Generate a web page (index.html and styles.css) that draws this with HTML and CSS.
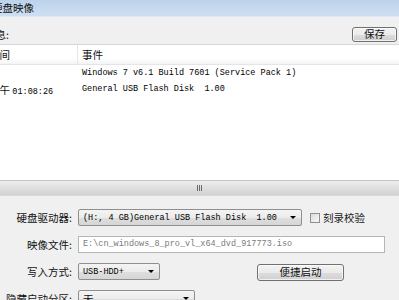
FILE: index.html
```html
<!DOCTYPE html>
<html lang="zh-CN">
<head>
    <meta charset="UTF-8">
    <meta name="viewport" content="width=device-width, initial-scale=1.0">
    <title>硬盘映像</title>
    <link rel="stylesheet" href="styles.css">
</head>
<body>
    <div class="window">
        <div class="titlebar"><span class="title">硬盘映像</span></div>
        <div class="toolbar">
            <span class="msg-label">消息:</span>
            <button class="btn save-btn">保存</button>
        </div>
        <div class="log">
            <div class="log-head">
                <div class="col-time">时间</div>
                <div class="col-event">事件</div>
            </div>
            <div class="log-row">
                <div class="col-time"></div>
                <div class="col-event mono">Windows 7 v6.1 Build 7601 (Service Pack 1)</div>
            </div>
            <div class="log-row">
                <div class="col-time">下午 <span class="mono">01:08:26</span></div>
                <div class="col-event mono">General USB Flash Disk&nbsp; 1.00</div>
            </div>
        </div>
        <div class="splitter"><span class="grip"></span></div>
        <div class="form">
            <label class="form-label">硬盘驱动器:</label>
            <div class="form-field">
                <div class="combo combo-drive"><span class="mono">(H:, 4 GB)General USB Flash Disk&nbsp; 1.00</span><span class="arrow"></span></div>
                <span class="check"></span>
                <span class="check-label">刻录校验</span>
            </div>

            <label class="form-label">映像文件:</label>
            <div class="form-field">
                <div class="textbox mono">E:\cn_windows_8_pro_vl_x64_dvd_917773.iso</div>
            </div>

            <label class="form-label">写入方式:</label>
            <div class="form-field">
                <div class="combo combo-mode"><span class="mono">USB-HDD+</span><span class="arrow"></span></div>
                <button class="btn boot-btn">便捷启动</button>
            </div>

            <label class="form-label">隐藏启动分区:</label>
            <div class="form-field">
                <div class="combo combo-hide"><span>无</span><span class="arrow"></span></div>
            </div>
        </div>
    </div>
</body>
</html>
```

FILE: styles.css
```css
body {
    margin: 0;
    height: 300px;
    overflow: hidden;
    background: #f0f0f0;
    font-family: "Noto Sans CJK SC", "DejaVu Sans", sans-serif;
    font-size: 10.5px;
    color: #111;
}
.mono {
    font-family: "Liberation Mono", "DejaVu Sans Mono", monospace;
    font-size: 8.5px;
    color: #000;
}
.window {
    margin-left: -20px;
    width: 419px;
    display: flex;
    flex-direction: column;
}
.window > div {
    flex-shrink: 0;
}
.titlebar {
    height: 17px;
    background: linear-gradient(#bcd2ec, #cfdff2);
    border-bottom: 1px solid #dfe9f5;
    box-sizing: border-box;
    display: flex;
    align-items: center;
}
.title {
    padding-left: 12px;
    line-height: 1;
}
.toolbar {
    height: 27px;
    display: flex;
    justify-content: space-between;
    align-items: flex-start;
    padding-right: 2px;
    box-sizing: border-box;
}
.msg-label {
    padding-left: 5px;
    margin-top: 10px;
    line-height: 15px;
}
.btn {
    font-family: "Noto Sans CJK SC", sans-serif;
    font-size: 10.5px;
    line-height: 1;
    padding: 0;
    color: #111;
    border: 1px solid #707070;
    border-radius: 3px;
    background: linear-gradient(#f2f2f2 0%, #ebebeb 50%, #dddddd 51%, #cfcfcf 100%);
    box-shadow: inset 0 0 0 1px rgba(255, 255, 255, 0.7);
}
.save-btn {
    margin-top: 10px;
    width: 45px;
    height: 15px;
}
.log {
    height: 136px;
    background: #fff;
    border-top: 1px solid #d6d6d6;
    box-sizing: border-box;
}
.log-head {
    height: 19px;
    display: flex;
    background: linear-gradient(#ffffff 70%, #f3f4f6);
    border-bottom: 1px solid #e3e5e8;
}
.log-head .col-time {
    border-right: 1px solid #e3e5e8;
}
.log-head div {
    line-height: 19px;
}
.col-time {
    width: 98px;
    padding-left: 9px;
    box-sizing: border-box;
    white-space: nowrap;
}
.col-event {
    padding-left: 4px;
    white-space: pre;
}
.log-row {
    height: 16px;
    display: flex;
    align-items: center;
}
.splitter {
    height: 16px;
    border-top: 1px solid #c4c4c4;
    border-bottom: 1px solid #d8d8d8;
    box-sizing: border-box;
    background: linear-gradient(#eeeeee, #dcdcdc 60%, #d2d2d2);
    display: flex;
    justify-content: center;
    align-items: center;
}
.grip {
    width: 5px;
    height: 6px;
    margin-left: 20px;
    background: repeating-linear-gradient(90deg, #6a6a6a 0 1px, transparent 1px 2px);
}
.form {
    display: grid;
    grid-template-columns: 92px 1fr;
    column-gap: 6px;
    row-gap: 10px;
    grid-auto-rows: 17px;
    padding-top: 13px;
}
.form-label {
    text-align: right;
    line-height: 17px;
    white-space: nowrap;
}
.form-field {
    display: flex;
    align-items: center;
}
.combo {
    height: 17px;
    box-sizing: border-box;
    border: 1px solid #8e8f8f;
    border-radius: 2px;
    background: linear-gradient(#f4f4f4, #ececec 50%, #dedede 51%, #d6d6d6);
    display: flex;
    align-items: center;
    justify-content: space-between;
    padding: 0 5px 0 4px;
    white-space: pre;
}
.arrow {
    width: 0;
    height: 0;
    border-left: 3px solid transparent;
    border-right: 3px solid transparent;
    border-top: 3px solid #000;
}
.combo-drive {
    width: 224px;
}
.combo-mode {
    width: 82px;
}
.combo-hide {
    width: 117px;
}
.check {
    width: 10px;
    height: 10px;
    margin-left: 8px;
    box-sizing: border-box;
    border: 1px solid #8f8f8f;
    background: linear-gradient(135deg, #dcdcdc, #f8f8f8);
}
.check-label {
    margin-left: 3px;
    color: #222;
}
.textbox {
    width: 307px;
    height: 17px;
    box-sizing: border-box;
    border: 1px solid #b5b5b5;
    background: #fff;
    color: #7a7a7a;
    padding-left: 4px;
    line-height: 15px;
    white-space: nowrap;
}
.boot-btn {
    margin-left: 97px;
    margin-top: 2px;
    width: 87px;
    height: 17px;
}
```
